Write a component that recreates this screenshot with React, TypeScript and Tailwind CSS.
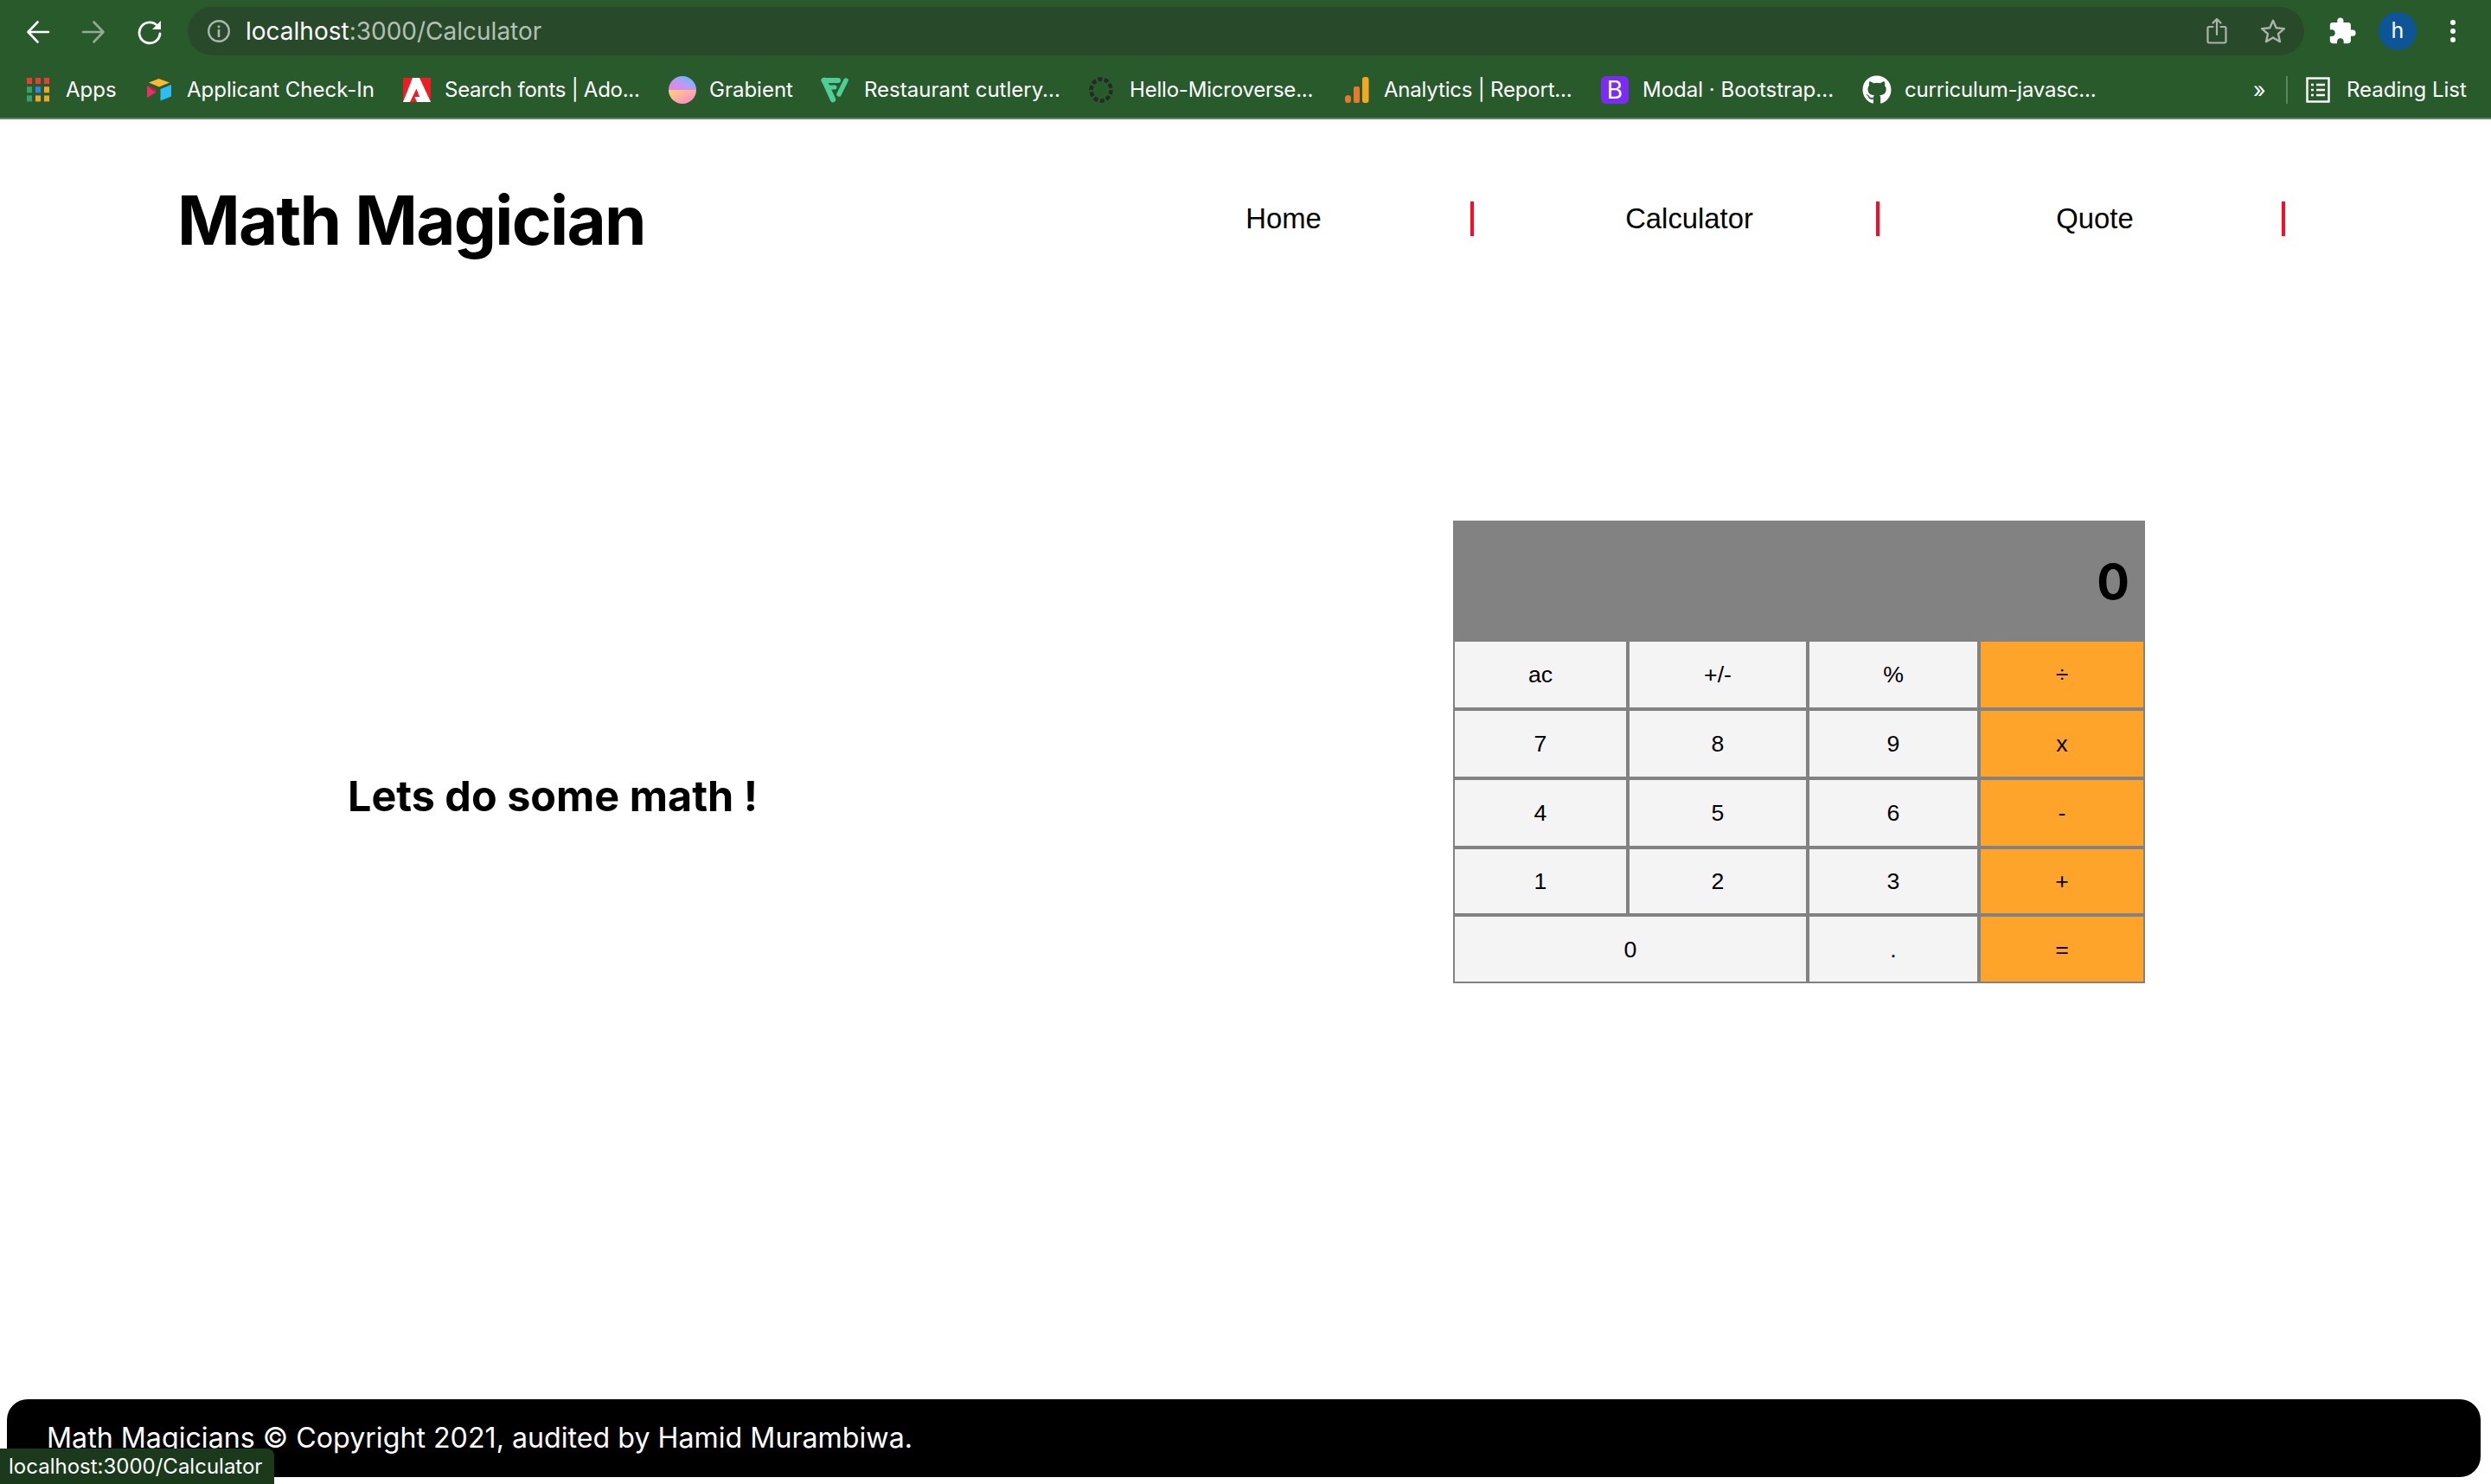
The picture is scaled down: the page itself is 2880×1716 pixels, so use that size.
import React from "react";
import { MdExtension } from "react-icons/md";
import { FaGithub } from "react-icons/fa";

const Chrome = "[font-family:Inter,'Liberation_Sans',sans-serif]";

function Back() {
  return (
    <svg width="28" height="28" viewBox="0 0 28 28" fill="none" stroke="#ffffff" strokeWidth="2.6" strokeLinecap="round" strokeLinejoin="round">
      <path d="M26 14H3M13.5 2.5 2.5 14l11 11.5" />
    </svg>
  );
}
function Forward() {
  return (
    <svg width="28" height="28" viewBox="0 0 28 28" fill="none" stroke="#95ab96" strokeWidth="2.6" strokeLinecap="round" strokeLinejoin="round">
      <path d="M2 14h23M14.5 2.5 25.5 14l-11 11.5" />
    </svg>
  );
}
function Reload() {
  return (
    <svg width="30" height="30" viewBox="0 0 30 30" fill="none">
      <path d="M24.5 8.5A12 12 0 1 0 27 17" stroke="#ffffff" strokeWidth="2.8" strokeLinecap="round" />
      <path d="M28 2v10H18z" fill="#ffffff" />
    </svg>
  );
}
function Info() {
  return (
    <svg width="28" height="28" viewBox="0 0 28 28" fill="none">
      <circle cx="14" cy="14" r="11.8" stroke="#aab5ab" strokeWidth="2.4" />
      <rect x="12.7" y="12" width="2.6" height="9" fill="#aab5ab" />
      <rect x="12.7" y="7.5" width="2.6" height="2.8" fill="#aab5ab" />
    </svg>
  );
}
function Share() {
  return (
    <svg width="24" height="32" viewBox="0 0 24 32" fill="none" stroke="#aab5ab" strokeWidth="2.2" strokeLinecap="round" strokeLinejoin="round">
      <path d="M7.5 11H3a1.5 1.5 0 0 0-1.500 1.500V28A1.500 1.500 0 0 0 3 29.500h18a1.500 1.500 0 0 0 1.500-1.500V12.500A1.500 1.500 0 0 0 21 11h-4.500" />
      <path d="M12 20V2M7.500 6.500 12 2l4.500 4.500" />
    </svg>
  );
}
function Star() {
  return (
    <svg width="30" height="30" viewBox="0 0 30 30" fill="none" stroke="#aab5ab" strokeWidth="2.4" strokeLinejoin="round">
      <path d="m15 2.800 3.700 8.400 9.200.9-6.900 6.100 2 9-8-4.700-8 4.700 2-9-6.900-6.100 9.200-.9z" />
    </svg>
  );
}
function Dots() {
  return (
    <svg width="8" height="28" viewBox="0 0 8 28" fill="#ffffff">
      <circle cx="4" cy="4" r="3" />
      <circle cx="4" cy="14" r="3" />
      <circle cx="4" cy="24" r="3" />
    </svg>
  );
}
function AppsIcon() {
  const c = ["#ee3b36", "#ee3b36", "#ee3b36", "#36a269", "#2f86e8", "#f1a52c", "#36a269", "#f1a52c", "#f1a52c"];
  return (
    <svg width="26" height="28" viewBox="0 0 26 28">
      {c.map((f, i) => (
        <rect key={i} x={(i % 3) * 10} y={Math.floor(i / 3) * 10.2} width="6" height="7" fill={f} />
      ))}
    </svg>
  );
}
function Airtable() {
  return (
    <svg width="28" height="26" viewBox="0 0 28 26">
      <path d="M13.500 0 26 4.500 14 9.500 2 4.500z" fill="#fcb82e" />
      <path d="M15.500 12 28 7v13.500L15.500 25.500z" fill="#2dbcf7" />
      <path d="M0 8v14l10.500-6.500z" fill="#ea2f67" />
      <path d="M0 7.500 12 12.500 8 15z" fill="#9c2b52" />
    </svg>
  );
}
function Adobe() {
  return (
    <svg width="32" height="28" viewBox="0 0 32 28">
      <rect width="32" height="28" fill="#ee1c25" />
      <path d="M11 0h8l13 28H16l-2.500-6H19l-3.500-9.500L8 28H0z" fill="#ffffff" />
    </svg>
  );
}
function Grabient() {
  return (
    <svg width="32" height="32" viewBox="0 0 32 32">
      <defs>
        <linearGradient id="grabTop" x1="0" y1="1" x2="1" y2="0">
          <stop offset="0" stopColor="#f47ce6" />
          <stop offset="0.5" stopColor="#b79cf4" />
          <stop offset="1" stopColor="#45cbff" />
        </linearGradient>
        <linearGradient id="grabBottom" x1="0" y1="0" x2="1" y2="1">
          <stop offset="0" stopColor="#fdd679" />
          <stop offset="1" stopColor="#ff7fd0" />
        </linearGradient>
      </defs>
      <path d="M0 16a16 16 0 0 1 32 0z" fill="url(#grabTop)" />
      <path d="M0 16a16 16 0 0 0 32 0z" fill="url(#grabBottom)" />
    </svg>
  );
}
function Frontify() {
  return (
    <svg width="33" height="30" viewBox="0 0 33 30" fill="none" stroke="#4ecf97" strokeLinecap="round" strokeLinejoin="round">
      <path d="M3.500 4H20" strokeWidth="6" />
      <path d="M4 4 14 26" strokeWidth="6.500" />
      <path d="M11 12h5" strokeWidth="5" />
      <path d="M29 4 21 20" strokeWidth="5.500" />
    </svg>
  );
}
function Hello() {
  return (
    <svg width="28" height="30" viewBox="0 0 28 30" fill="none">
      <ellipse cx="14" cy="15" rx="11.500" ry="12.500" stroke="#232a26" strokeWidth="4.500" strokeDasharray="5 2.500" />
    </svg>
  );
}
function Analytics() {
  return (
    <svg width="28" height="30" viewBox="0 0 28 30">
      <rect x="0" y="21" width="7" height="9" rx="3.500" fill="#e47a2c" />
      <rect x="10" y="11" width="7" height="19" rx="2" fill="#e47a2c" />
      <rect x="20" y="0" width="7.500" height="30" rx="3" fill="#f3a824" />
    </svg>
  );
}
function Reading() {
  return (
    <svg width="28" height="30" viewBox="0 0 28 30" fill="none" stroke="#ffffff" strokeWidth="2.400">
      <rect x="1.500" y="1.500" width="25" height="27" />
      <path d="M6 9h3M12 9h10M6 15h3M12 15h10M6 21h3M12 21h10" />
    </svg>
  );
}

function Bookmark({ icon, label, className }: { icon: React.ReactNode; label: string; className: string }) {
  return (
    <div className={`flex shrink-0 items-center ${className}`}>
      {icon}
      <span className="whitespace-nowrap">{label}</span>
    </div>
  );
}

function BrowserBar() {
  return (
    <div className={`h-[138px] shrink-0 border-b-2 border-[#5f8560] bg-[#295a2c] text-white ${Chrome}`}>
      <div className="flex h-[72px] items-start">
        <div className="ml-[30px] mt-[22px] flex items-center gap-[36px]">
          <Back />
          <Forward />
          <div>
            <Reload />
          </div>
        </div>
        <div className="ml-[29px] mt-[8px] flex h-[56px] w-[2447px] items-center rounded-full bg-[#28492a] pl-[22px]">
          <Info />
          <span className="ml-[17px] text-[28px]">
            localhost<span className="text-[#b3c0b4]">:3000/Calculator</span>
          </span>
          <div className="ml-auto mr-[21px] flex items-center gap-[38px]">
            <Share />
            <Star />
          </div>
        </div>
        <div className="ml-[27px] mt-[19px]">
          <MdExtension size={34} color="#ffffff" />
        </div>
        <div className="ml-[25px] mt-[14px] flex h-[44px] w-[44px] items-center justify-center rounded-full bg-[#0d5596] text-[25px]">
          h
        </div>
        <div className="ml-[38px] mt-[22px]">
          <Dots />
        </div>
      </div>
      <div className="flex h-[64px] items-center pl-[31px] text-[24px]">
        <Bookmark className="w-[139px] gap-[19px]" icon={<AppsIcon />} label="Apps" />
        <Bookmark className="w-[296px] gap-[18px]" icon={<Airtable />} label="Applicant Check-In" />
        <Bookmark className="w-[307px] gap-[16px] tracking-[-0.27px]" icon={<Adobe />} label="Search fonts | Ado..." />
        <Bookmark className="w-[176px] gap-[15px]" icon={<Grabient />} label="Grabient" />
        <Bookmark className="w-[310px] gap-[17px]" icon={<Frontify />} label="Restaurant cutlery..." />
        <Bookmark className="w-[296px] gap-[19px] tracking-[-0.2px]" icon={<Hello />} label="Hello-Microverse..." />
        <Bookmark className="w-[296px] gap-[17px] tracking-[-0.2px]" icon={<Analytics />} label="Analytics | Report..." />
        <Bookmark
          className="w-[302px] gap-[16px]"
          icon={
            <div className="flex h-8 w-8 items-center justify-center rounded-[6px] bg-[#7a2cf2] text-[28px] leading-none text-white">
              B
            </div>
          }
          label="Modal · Bootstrap..."
        />
        <Bookmark className="w-[452px] gap-[15px] tracking-[-0.2px]" icon={<FaGithub size={34} color="#ffffff" />} label="curriculum-javasc..." />
        <span className="w-[38px] text-[25px] leading-none">»</span>
        <div className="h-[32px] w-[2px] bg-[#5f8560]" />
        <div className="ml-[21px] flex items-center gap-[19px]">
          <Reading />
          <span className="whitespace-nowrap">Reading List</span>
        </div>
      </div>
    </div>
  );
}

function NavItem({ label }: { label: string }) {
  return (
    <li className="flex h-[40px] w-[436px] items-center justify-center border-r-[4px] border-[#ff0a26] text-[32.8px] text-black">
      {label}
    </li>
  );
}

function Key({ label, className = "" }: { label: string; className?: string }) {
  return (
    <button className={`flex items-center justify-center border-2 border-[#828282] bg-[#f4f4f4] text-[26.67px] text-black ${className}`}>
      {label}
    </button>
  );
}
function Op({ label }: { label: string }) {
  return <Key label={label} className="bg-[#ffa42a]" />;
}

function Calculator() {
  return (
    <div className="w-[800px] shrink-0 [font-family:'Liberation_Sans',Arial,sans-serif]">
      <div className="flex h-[138px] items-center justify-end bg-[#828282] pr-[18px] pt-[4px] text-[56px] font-bold text-black [font-family:Inter,sans-serif]">
        0
      </div>
      <div className="grid h-[397px] grid-cols-[202px_208px_198px_192px] grid-rows-[80px_80px_80px_78px_79px]">
        <Key label="ac" />
        <Key label="+/-" />
        <Key label="%" />
        <Op label="÷" />
        <Key label="7" />
        <Key label="8" />
        <Key label="9" />
        <Op label="x" />
        <Key label="4" />
        <Key label="5" />
        <Key label="6" />
        <Op label="-" />
        <Key label="1" />
        <Key label="2" />
        <Key label="3" />
        <Op label="+" />
        <Key label="0" className="col-span-2" />
        <Key label="." />
        <Op label="=" />
      </div>
    </div>
  );
}

export default function App() {
  return (
    <div className="relative flex h-[1716px] w-[2880px] flex-col overflow-hidden bg-white">
      <BrowserBar />
      <header className="flex h-[232px] shrink-0 items-center justify-between pl-[205px] pr-[238px]">
        <h1 className="text-[78px] font-bold tracking-[-1.7px] text-black [font-family:Inter,sans-serif]">Math Magician</h1>
        <ul className="-mt-[2px] flex gap-[33px] [font-family:'Liberation_Sans',Arial,sans-serif]">
          <NavItem label="Home" />
          <NavItem label="Calculator" />
          <NavItem label="Quote" />
        </ul>
      </header>
      <main className="flex items-start pl-[402px] pr-[400px] pt-[232px]">
        <h2 className="mt-[283px] text-[48.5px] font-bold text-black [font-family:Inter,sans-serif]">Lets do some math !</h2>
        <div className="ml-auto">
          <Calculator />
        </div>
      </main>
      <footer className="mb-[8px] ml-[8px] mr-[12px] mt-auto flex h-[90px] items-center rounded-[24px] bg-black pl-[46px] text-[32.2px] text-white [font-family:Inter,sans-serif]">
        Math Magicians © Copyright 2021, audited by Hamid Murambiwa.
      </footer>
      <div className={`absolute bottom-0 left-0 flex h-[41px] w-[317px] items-center rounded-tr-[8px] bg-[#1a3a1b] pl-[10px] text-[24px] text-white ${Chrome}`}>
        localhost:3000/Calculator
      </div>
    </div>
  );
}
